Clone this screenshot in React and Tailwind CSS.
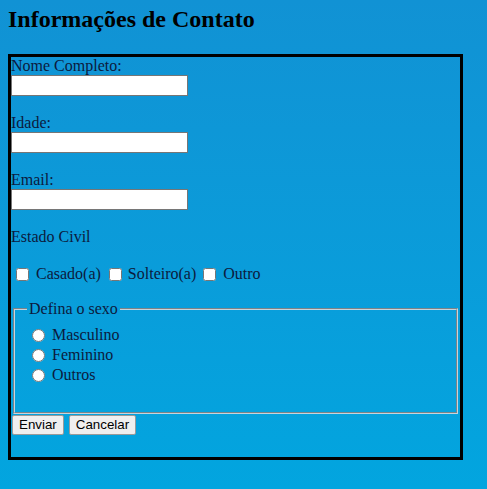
import { useState } from 'react';

const fields = [
  { id: 'nome', label: 'Nome Completo:', type: 'text' },
  { id: 'idade', label: 'Idade:', type: 'number' },
  { id: 'email', label: 'Email:', type: 'email' },
];

export default function App() {
  const [sexo, setSexo] = useState('');

  return (
    <div className="min-h-screen w-full bg-gradient-to-b from-[#1192d4] to-[#02a5df] px-[8px] pt-[5px] font-['Liberation_Serif',serif] text-[16px] text-[#0c1a3d]">
      <h2 className="text-[24px] font-bold leading-[28px] text-black">Informações de Contato</h2>

      <form
        className="mt-[21px] flex h-[406px] w-[455px] flex-col border-[3px] border-black"
        onSubmit={(e) => e.preventDefault()}
      >
        {/* Campos de texto */}
        {fields.map((f) => (
          <div key={f.id} className="flex flex-col pb-[18px]">
            <label htmlFor={f.id} className="leading-[18px]">{f.label}</label>
            <input
              id={f.id}
              type="text"
              className="h-[21px] w-[177px] border border-[#767676] bg-white px-[2px] font-['Liberation_Sans',sans-serif] text-[13.33px] text-black outline-none"
            />
          </div>
        ))}

        <p className="leading-[18px]">Estado Civil</p>

        {/* Estado civil */}
        <div className="mt-[19px] flex h-[18px] items-center whitespace-nowrap leading-[18px]">
          <input type="checkbox" id="casado" className="ml-[5px] mr-[7px] h-[13px] w-[13px]" />
          <label htmlFor="casado">Casado(a)</label>
          <input type="checkbox" id="solteiro" className="ml-[8px] mr-[6px] h-[13px] w-[13px]" />
          <label htmlFor="solteiro">Solteiro(a)</label>
          <input type="checkbox" id="outro" className="ml-[7px] mr-[7px] h-[13px] w-[13px]" />
          <label htmlFor="outro">Outro</label>
        </div>

        {/* Sexo */}
        <fieldset className="mx-[2px] mt-[17px] border-2 border-[#c8d4dc] px-[12px] pb-[10px] pt-[7px] [border-style:groove]">
          <legend className="px-[2px] leading-[18px]">Defina o sexo</legend>
          {['Masculino', 'Feminino', 'Outros'].map((s) => (
            <div key={s} className="flex h-[20px] items-center leading-[18px]">
              <input
                type="radio"
                name="sexo"
                id={s}
                checked={sexo === s}
                onChange={() => setSexo(s)}
                className="ml-[5px] mr-[7px] h-[13px] w-[13px]"
              />
              <label htmlFor={s}>{s}</label>
            </div>
          ))}
          <div className="h-[17px]" />
        </fieldset>

        <div className="ml-[1px] mt-px flex gap-[5px] font-['Liberation_Sans',sans-serif] text-[13.33px] text-black">
          <button type="submit" className="h-[20px] rounded-[2px] border border-[#9a9a9a] bg-[#efefef] px-[6px] leading-[16px]">
            Enviar
          </button>
          <button type="reset" className="h-[20px] rounded-[2px] border border-[#9a9a9a] bg-[#efefef] px-[6px] leading-[16px]">
            Cancelar
          </button>
        </div>
      </form>
    </div>
  );
}
